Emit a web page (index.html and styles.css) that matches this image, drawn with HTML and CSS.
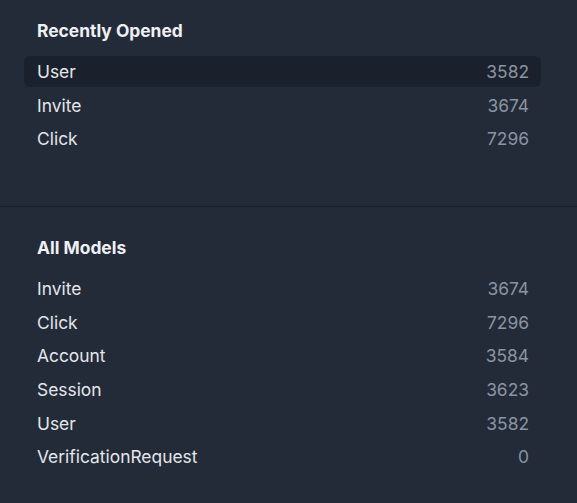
FILE: index.html
```html
<!DOCTYPE html>
<html lang="en">
<head>
<meta charset="utf-8">
<title>Models</title>
<link rel="stylesheet" href="styles.css">
</head>
<body>
<div class="panel">
  <section class="section section--first">
    <h2 class="section-title">Recently Opened</h2>
    <ul class="list">
      <li class="row row--active"><span class="name">User</span><span class="count">3582</span></li>
      <li class="row"><span class="name">Invite</span><span class="count">3674</span></li>
      <li class="row"><span class="name">Click</span><span class="count">7296</span></li>
    </ul>
  </section>
  <section class="section">
    <h2 class="section-title">All Models</h2>
    <ul class="list">
      <li class="row"><span class="name">Invite</span><span class="count">3674</span></li>
      <li class="row"><span class="name">Click</span><span class="count">7296</span></li>
      <li class="row"><span class="name">Account</span><span class="count">3584</span></li>
      <li class="row"><span class="name">Session</span><span class="count">3623</span></li>
      <li class="row"><span class="name">User</span><span class="count">3582</span></li>
      <li class="row"><span class="name">VerificationRequest</span><span class="count">0</span></li>
    </ul>
  </section>
</div>
</body>
</html>
```

FILE: styles.css
```css
html, body {
  margin: 0;
  padding: 0;
  background: #232b38;
  height: 100%;
}

body {
  font-family: Inter, "Liberation Sans", sans-serif;
  color: #e3e6eb;
  overflow: hidden;
}

.panel {
  display: flex;
  flex-direction: column;
}

.section {
  padding: 29px 36px 40px 24px;
}

.section--first {
  padding-top: 19px;
  padding-bottom: 52px;
  border-bottom: 1px solid #1a202a;
}

.section-title {
  margin: 0 0 13px 13px;
  font-size: 17.4px;
  line-height: 24px;
  font-weight: 700;
  color: #eef0f3;
}

.list {
  list-style: none;
  margin: 0;
  padding: 0;
  display: flex;
  flex-direction: column;
  gap: 2.6px;
}

.row {
  display: flex;
  justify-content: space-between;
  align-items: center;
  height: 31px;
  padding: 0 12px 0 13px;
  border-radius: 6px;
  font-size: 17.4px;
}

.row--active {
  background: #1b212c;
}

.count {
  color: #8a94a2;
}
```
